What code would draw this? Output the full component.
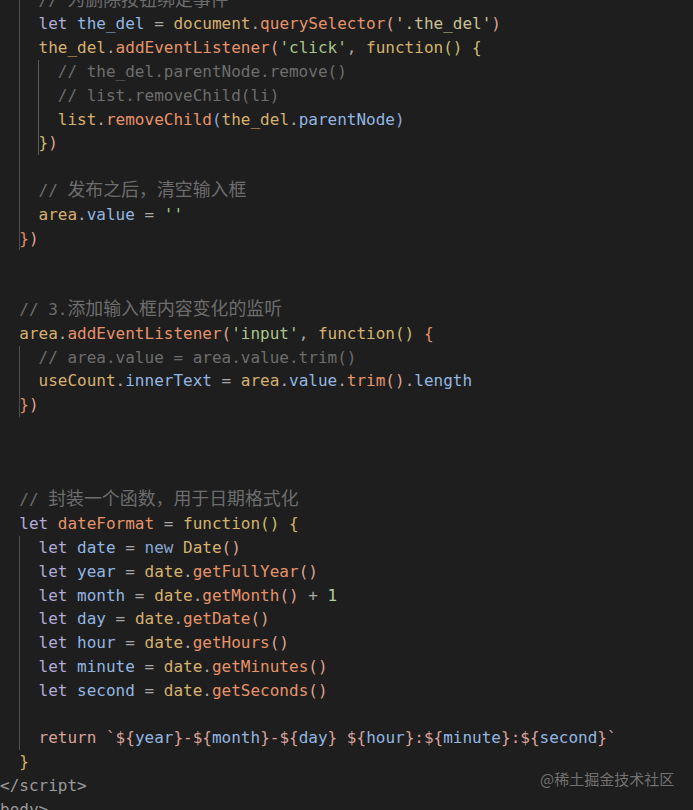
const kw = "text-[#b3acd8]"; // let / new
const vr = "text-[#93b6e2]"; // variables & properties
const ob = "text-[#d6b16f]"; // objects
const fn = "text-[#e6936a]"; // methods
const st = "text-[#a8c48c]"; // strings
const sel = "text-[#c9c196]"; // selector string
const cm = "text-[#6d6d6d]"; // comments
const op = "text-[#a8a8a8]"; // operators, dots
const fk = "text-[#d3b46e]"; // function keyword
const b1 = "text-[#dca392]"; // brackets level 1
const b2 = "text-[#c7bd6e]"; // brackets level 2
const b3 = "text-[#8fa9dc]"; // brackets level 3
const or = "text-[#e0906a]"; // orange braces
const pk = "text-[#d9a19a]"; // return & template
const nm = "text-[#b5cea8]"; // numbers
const tg = "text-[#9a9a9a]"; // tags

type Tok = [string, string, boolean?];
type Line = { toks: Tok[]; guides?: string[] };

const g1 = "left-[19px] bg-[#4e4e4e]";
const g2 = "left-[38px] bg-[#5a5a5a]";

const lines: Line[] = [
  { toks: [["    // ", cm], ["为删除按钮绑定事件", cm, true]], guides: [g1] },
  {
    toks: [["    let ", kw], ["the_del", vr], [" = ", op], ["document", ob], [".", op], ["querySelector", fn], ["(", b1], ["'.the_del'", sel], [")", b1]],
    guides: [g1],
  },
  {
    toks: [["    the_del", ob], [".", op], ["addEventListener", fn], ["(", b1], ["'click'", st], [", ", op], ["function", fk], ["()", b2], [" ", op], ["{", b2]],
    guides: [g1],
  },
  { toks: [["      // the_del.parentNode.remove()", cm]], guides: [g1, g2] },
  { toks: [["      // list.removeChild(li)", cm]], guides: [g1, g2] },
  {
    toks: [["      list", ob], [".", op], ["removeChild", fn], ["(", b3], ["the_del", ob], [".", op], ["parentNode", vr], [")", b3]],
    guides: [g1, g2],
  },
  { toks: [["    ", op], ["}", b2], [")", b1]], guides: [g1, g2] },
  { toks: [], guides: [g1] },
  { toks: [["    // ", cm], ["发布之后，清空输入框", cm, true]], guides: [g1] },
  { toks: [["    area", ob], [".", op], ["value", vr], [" = ", op], ["''", st]], guides: [g1] },
  { toks: [["  ", op], ["}", or], [")", b1]], guides: [g1] },
  { toks: [] },
  { toks: [] },
  { toks: [["  // 3.", cm], ["添加输入框内容变化的监听", cm, true]] },
  {
    toks: [["  area", ob], [".", op], ["addEventListener", fn], ["(", b1], ["'input'", st], [", ", op], ["function", fk], ["()", b2], [" ", op], ["{", or]],
  },
  { toks: [["    // area.value = area.value.trim()", cm]], guides: [g1] },
  {
    toks: [["    useCount", ob], [".", op], ["innerText", vr], [" = ", op], ["area", ob], [".", op], ["value", vr], [".", op], ["trim", fn], ["()", b1], [".", op], ["length", vr]],
    guides: [g1],
  },
  { toks: [["  ", op], ["}", or], [")", b1]], guides: [g1] },
  { toks: [] },
  { toks: [] },
  { toks: [] },
  { toks: [["  // ", cm], ["封装一个函数，用于日期格式化", cm, true]] },
  { toks: [["  let ", kw], ["dateFormat", fn], [" = ", op], ["function", fk], ["()", b2], [" ", op], ["{", "text-[#d8b262]"]] },
  { toks: [["    let ", kw], ["date", vr], [" = ", op], ["new ", "text-[#8aa8d8]"], ["Date", ob], ["()", b1]], guides: [g1] },
  { toks: [["    let ", kw], ["year", vr], [" = ", op], ["date", ob], [".", op], ["getFullYear", fn], ["()", b1]], guides: [g1] },
  { toks: [["    let ", kw], ["month", vr], [" = ", op], ["date", ob], [".", op], ["getMonth", fn], ["()", b1], [" + ", op], ["1", nm]], guides: [g1] },
  { toks: [["    let ", kw], ["day", vr], [" = ", op], ["date", ob], [".", op], ["getDate", fn], ["()", b1]], guides: [g1] },
  { toks: [["    let ", kw], ["hour", vr], [" = ", op], ["date", ob], [".", op], ["getHours", fn], ["()", b1]], guides: [g1] },
  { toks: [["    let ", kw], ["minute", vr], [" = ", op], ["date", ob], [".", op], ["getMinutes", fn], ["()", b1]], guides: [g1] },
  { toks: [["    let ", kw], ["second", vr], [" = ", op], ["date", ob], [".", op], ["getSeconds", fn], ["()", b1]], guides: [g1] },
  { toks: [], guides: [g1] },
  {
    toks: [
      ["    return ", pk], ["`", "text-[#c8a39b]"],
      ["${", pk], ["year", vr], ["}", pk], ["-", pk],
      ["${", pk], ["month", vr], ["}", pk], ["-", pk],
      ["${", pk], ["day", vr], ["}", pk], [" ", pk],
      ["${", pk], ["hour", vr], ["}", pk], [":", pk],
      ["${", pk], ["minute", vr], ["}", pk], [":", pk],
      ["${", pk], ["second", vr], ["}", pk], ["`", "text-[#c8a39b]"],
    ],
    guides: [g1],
  },
  { toks: [["  ", op], ["}", "text-[#d8b262]"]] },
  { toks: [["</", tg], ["script", tg], [">", tg]] },
  { toks: [["body>", tg]] },
];

function CodeLine({ line }: { line: Line }) {
  return (
    <div className="relative h-[23.8px] whitespace-pre leading-[23.8px]">
      {line.guides?.map((g, i) => (
        <span key={i} className={`absolute top-0 h-full w-px ${g}`} />
      ))}
      {line.toks.map(([text, cls, cjk], i) =>
        cjk ? (
          <span
            key={i}
            className={`${cls} font-['Noto_Sans_CJK_SC',sans-serif] text-[17.9px] leading-none`}
          >
            {text}
          </span>
        ) : (
          <span key={i} className={cls}>
            {text}
          </span>
        )
      )}
    </div>
  );
}

export default function App() {
  return (
    <div className="relative h-[810px] w-full overflow-hidden bg-[#1e1e1e]">
      <div className="-mt-[11.4px] font-['DejaVu_Sans_Mono','Noto_Sans_CJK_SC',monospace] text-[16px]">
        {lines.map((line, i) => (
          <CodeLine key={i} line={line} />
        ))}
      </div>
      {/* watermark */}
      <div className="absolute left-[540px] top-[769px] font-['Noto_Sans_CJK_SC',sans-serif] text-[15px] leading-[20px] text-[#727272]">
        @稀土掘金技术社区
      </div>
    </div>
  );
}
